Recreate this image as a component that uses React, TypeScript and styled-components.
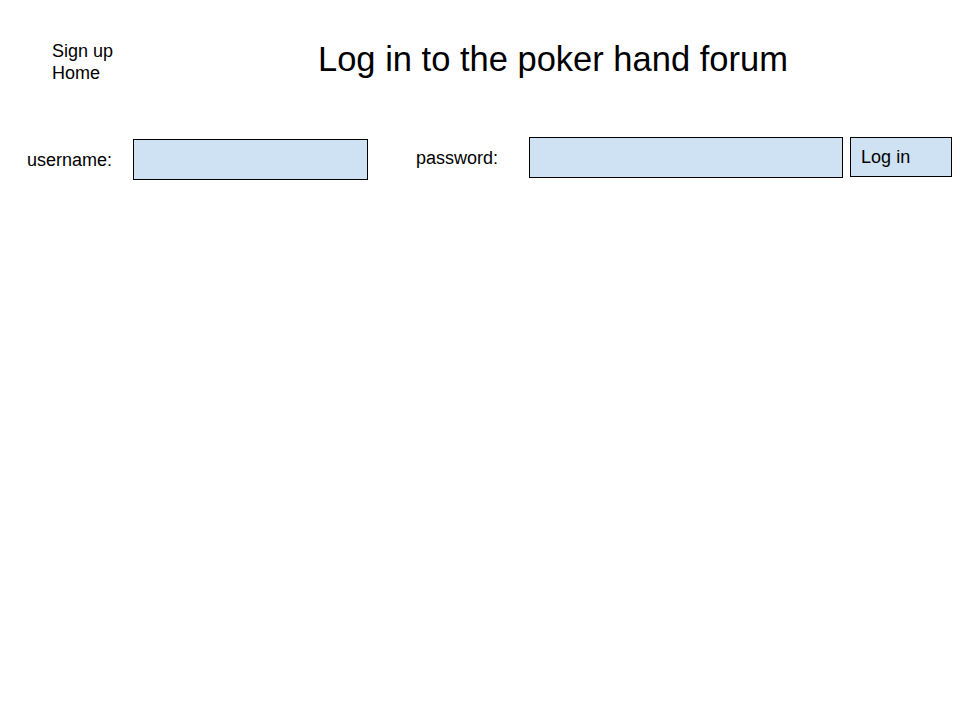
import React from 'react'
import styled, { createGlobalStyle } from 'styled-components'

const GlobalStyle = createGlobalStyle`
  body {
    margin: 0;
    background: #ffffff;
    font-family: 'Liberation Sans', Arial, sans-serif;
    color: #000000;
  }
`

const Page = styled.div`
  width: 960px;
  height: 720px;
  background: #ffffff;
`

const Header = styled.header`
  display: flex;
  align-items: flex-start;
  padding: 39px 0 0 52px;
`

const Nav = styled.nav`
  display: flex;
  flex-direction: column;
  width: 266px;
  margin-top: 1px;
`

const NavLink = styled.a`
  font-size: 18px;
  line-height: 22px;
  color: #000000;
  text-decoration: none;
  cursor: pointer;
`

const Title = styled.h1`
  margin: 0;
  font-size: 34.5px;
  line-height: 40px;
  font-weight: normal;
`

const FormRow = styled.form`
  display: flex;
  align-items: flex-start;
  margin-top: 53px;
  padding-left: 27px;
`

const Field = styled.div<{ $offset?: number; $gap: number; $left?: number }>`
  display: flex;
  align-items: center;
  gap: ${({ $gap }) => $gap}px;
  margin-top: ${({ $offset }) => $offset || 0}px;
  margin-left: ${({ $left }) => $left || 0}px;
`

const Label = styled.label`
  font-size: 18px;
  line-height: 22px;
`

const Input = styled.input<{ $width: number }>`
  box-sizing: border-box;
  width: ${({ $width }) => $width}px;
  height: 41px;
  margin: 0;
  padding: 0 8px;
  border: 1px solid #000000;
  border-radius: 0;
  background: #cfe2f3;
  font-family: inherit;
  font-size: 16px;
  outline: none;
`

const Button = styled.button`
  box-sizing: border-box;
  width: 102px;
  height: 40px;
  margin: 0 0 0 7px;
  padding: 0 0 0 10px;
  border: 1px solid #000000;
  border-radius: 0;
  background: #cfe2f3;
  font-family: inherit;
  font-size: 18px;
  text-align: left;
  color: #000000;
  cursor: pointer;
`

const App = () => {
  return (
    <Page>
      <GlobalStyle />
      <Header>
        <Nav>
          <NavLink>Sign up</NavLink>
          <NavLink>Home</NavLink>
        </Nav>
        <Title>Log in to the poker hand forum</Title>
      </Header>
      <FormRow onSubmit={(e) => e.preventDefault()}>
        <Field $offset={2} $gap={21}>
          <Label htmlFor="username">username:</Label>
          <Input id="username" type="text" $width={235} />
        </Field>
        <Field $gap={31} $left={48}>
          <Label htmlFor="password">password:</Label>
          <Input id="password" type="password" $width={314} />
        </Field>
        <Button type="submit">Log in</Button>
      </FormRow>
    </Page>
  )
}

export default App
